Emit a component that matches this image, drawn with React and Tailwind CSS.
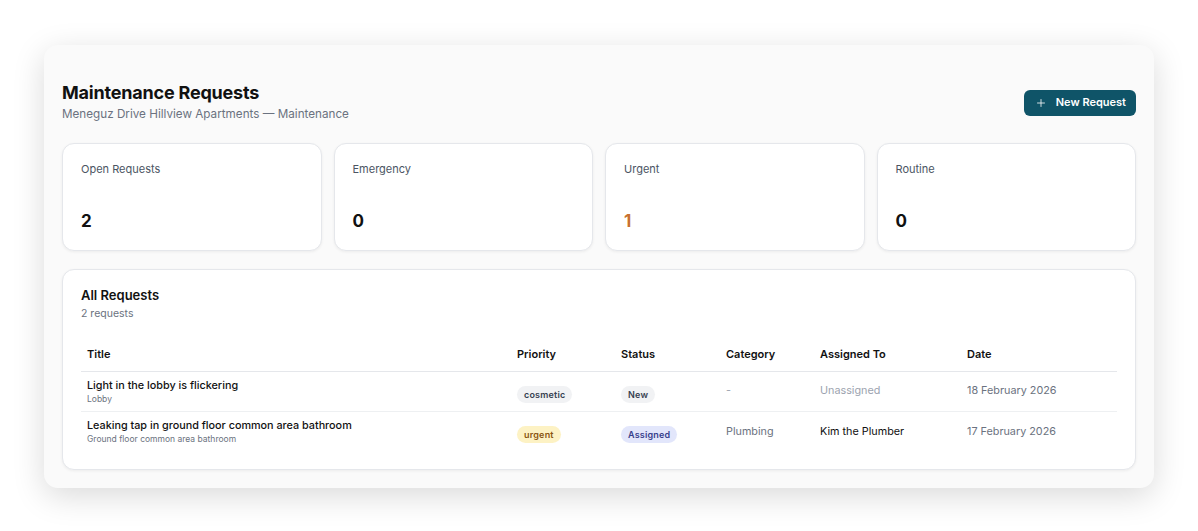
import React from "react";
import { Plus } from "lucide-react";

const stats = [
  { label: "Open Requests", value: "2", color: "text-[#111111]" },
  { label: "Emergency", value: "0", color: "text-[#111111]" },
  { label: "Urgent", value: "1", color: "text-[#c8702f]" },
  { label: "Routine", value: "0", color: "text-[#111111]" },
];

const cols = "grid grid-cols-[430px_104px_105px_94px_147px_1fr] items-center";

function Badge({ children, className }) {
  return (
    <span className={`inline-flex h-[17px] items-center rounded-full px-[7px] text-[9px] font-semibold tracking-[0.2px] ${className}`}>
      {children}
    </span>
  );
}

export default function App() {
  return (
    <div className="min-h-[531px] bg-white pt-[45px]" style={{ fontFamily: "Inter, 'Noto Sans', sans-serif" }}>
      <div className="mx-auto w-[1110px] rounded-[14px] bg-[#fafafa] px-[18px] pb-[18px] pt-[37px] shadow-[0_8px_32px_rgba(0,0,0,0.15)]">
        <div className="flex items-center justify-between">
          <div>
            <h1 className="text-[18px] font-bold leading-[22px] tracking-[-0.2px] text-[#111111]">Maintenance Requests</h1>
            <p className="mt-[2px] text-[11.7px] leading-[17px] text-[#6b7280]">Meneguz Drive Hillview Apartments — Maintenance</p>
          </div>
          <button className="flex h-[26px] items-center gap-[9px] rounded-[6px] bg-[#0f5468] pl-[11px] pr-[10px] text-[11px] font-semibold text-white">
            <Plus size={12} strokeWidth={1.6} />
            <span>New Request</span>
          </button>
        </div>

        <div className="mt-[20px] grid grid-cols-4 gap-[12px]">
          {stats.map((s) => (
            <div key={s.label} className="flex h-[108px] flex-col justify-between rounded-[12px] border border-[#e5e7eb] bg-white px-[18px] pb-[17px] pt-[17px] shadow-[0_1px_3px_rgba(0,0,0,0.06)]">
              <div className="text-[11px] leading-[16px] text-[#4b5563]">{s.label}</div>
              <div className={`text-[17px] font-bold leading-[24px] ${s.color}`}>{s.value}</div>
            </div>
          ))}
        </div>

        <div className="mt-[18px] rounded-[12px] border border-[#e5e7eb] bg-white px-[18px] pb-[17px] pt-[16px] shadow-[0_1px_3px_rgba(0,0,0,0.06)]">
          <div className="text-[13px] font-semibold leading-[18px] text-[#111111]">All Requests</div>
          <div className="mt-[2px] text-[10.5px] leading-[16px] text-[#6b7280]">2 requests</div>

          <div className="mt-[16px]">
            <div className={`${cols} h-[34px] border-b border-[#e5e7eb] text-[11px] font-semibold text-[#111111]`}>
              <div className="pl-[6px]">Title</div>
              <div className="pl-[6px]">Priority</div>
              <div className="pl-[6px]">Status</div>
              <div className="pl-[6px]">Category</div>
              <div className="pl-[6px]">Assigned To</div>
              <div className="pl-[6px]">Date</div>
            </div>

            <div className={`${cols} h-[40px] border-b border-[#eef0f2]`}>
              <div className="pl-[6px]">
                <div className="text-[10.8px] font-medium leading-[14px] text-[#111111]">Light in the lobby is flickering</div>
                <div className="text-[8.5px] leading-[12px] text-[#6b7280]">Lobby</div>
              </div>
              <div className="pl-[6px]"><Badge className="bg-[#f1f2f4] text-[#374151]">cosmetic</Badge></div>
              <div className="pl-[6px]"><Badge className="bg-[#f1f2f4] text-[#374151]">New</Badge></div>
              <div className="pl-[6px] text-[10.8px] text-[#9ca3af]">-</div>
              <div className="pl-[6px] text-[10.8px] text-[#9ca3af]">Unassigned</div>
              <div className="pl-[6px] text-[10.8px] text-[#6b7280]">18 February 2026</div>
            </div>

            <div className={`${cols} h-[40px]`}>
              <div className="pl-[6px]">
                <div className="text-[10.8px] font-medium leading-[14px] text-[#111111]">Leaking tap in ground floor common area bathroom</div>
                <div className="text-[8.5px] leading-[12px] text-[#6b7280]">Ground floor common area bathroom</div>
              </div>
              <div className="pl-[6px]"><Badge className="bg-[#fdf2c4] text-[#8a5510]">urgent</Badge></div>
              <div className="pl-[6px]"><Badge className="bg-[#e2e6fb] text-[#383f8c]">Assigned</Badge></div>
              <div className="pl-[6px] text-[10.8px] text-[#6b7280]">Plumbing</div>
              <div className="pl-[6px] text-[10.8px] text-[#111111]">Kim the Plumber</div>
              <div className="pl-[6px] text-[10.8px] text-[#6b7280]">17 February 2026</div>
            </div>
          </div>
        </div>
      </div>
    </div>
  );
}
